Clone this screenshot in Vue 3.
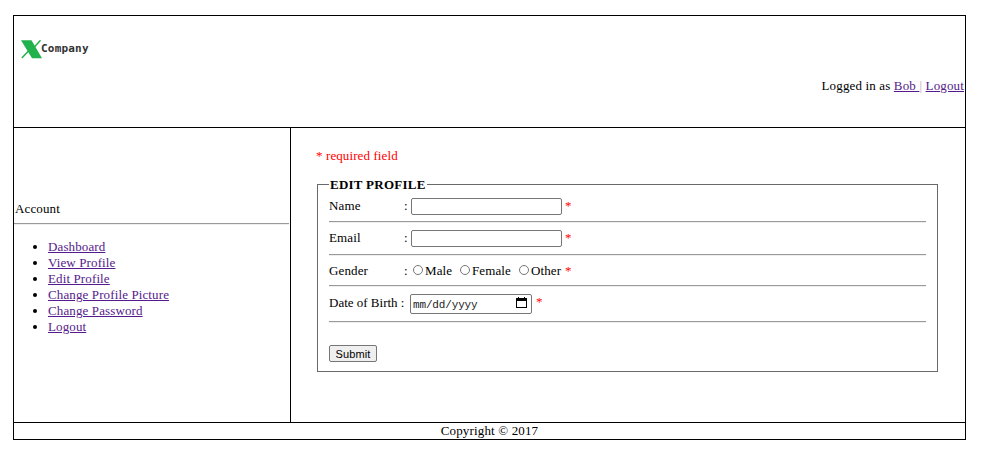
<script setup>
const links = ['Dashboard', 'View Profile', 'Edit Profile', 'Change Profile Picture', 'Change Password', 'Logout']
const genders = ['Male', 'Female', 'Other']
</script>

<template>
  <div class="page">
    <header class="header">
      <div class="logo">
        <svg width="22" height="19" viewBox="0 0 22 19">
          <path d="M0 .2h10.5L21 18.2H11z" fill="#22b14c" />
          <path d="M19.5 .3L13 7.5M7.5 11L.8 18" stroke="#22b14c" stroke-width="1.5" fill="none" />
        </svg>
        <span class="brand">Company</span>
      </div>
      <div class="session">Logged in as <a href="#">Bob&nbsp;</a><span class="bar">|</span> <a href="#">Logout</a></div>
    </header>
    <div class="body">
      <nav class="side">
        <div class="account">Account</div>
        <hr class="rule" />
        <ul>
          <li v-for="l in links" :key="l"><a href="#">{{ l }}</a></li>
        </ul>
      </nav>
      <main class="main">
        <p class="required">* required field</p>
        <fieldset>
          <legend>EDIT PROFILE</legend>
          <div class="row name"><label>Name</label><span class="colon">:</span><input class="text" type="text" /><span class="star">*</span></div>
          <hr class="rule" />
          <div class="row email"><label>Email</label><span class="colon">:</span><input class="text" type="text" /><span class="star">*</span></div>
          <hr class="rule" />
          <div class="row gender">
            <label>Gender</label><span class="colon">:</span>
            <span v-for="g in genders" :key="g" :class="['option', g.toLowerCase()]"><input type="radio" name="gender" />{{ g }}</span>
            <span class="star">*</span>
          </div>
          <hr class="rule" />
          <div class="row birth">
            <label class="dob">Date of Birth :</label>
            <span class="date">
              <input type="text" placeholder="mm/dd/yyyy" />
              <svg width="11" height="12" viewBox="0 0 11 12">
                <path d="M2 0h1v1h5V0h1v1h2v10H0V1h2zM1 4v6h9V4z" fill="#000" fill-rule="evenodd" />
              </svg>
            </span>
            <span class="star">*</span>
          </div>
          <hr class="rule" />
          <button type="button">Submit</button>
        </fieldset>
      </main>
    </div>
    <footer>Copyright © 2017</footer>
  </div>
</template>

<style>
body { margin: 0; background: #fff; }
</style>

<style scoped>
* { box-sizing: border-box; }
.page {
  width: 953px; height: 425px; margin: 15px 0 0 13px;
  border: 1px solid #000; display: grid; grid-template-rows: 112px 295px 16px;
  font: 13px/16px "Liberation Serif", "Times New Roman", serif; color: #000;
  letter-spacing: .12px;
}
a { color: #551a8b; text-decoration: underline; }
.header { border-bottom: 1px solid #000; padding: 24px 1px 0 7px; }
.logo { display: flex; height: 19px; }
.logo svg { flex: none; }
.brand { font: bold 11px/17px "DejaVu Sans Mono", monospace; color: #333; margin-left: -2px; letter-spacing: .2px; }
.session { text-align: right; margin-top: 19px; letter-spacing: .15px; }
.bar { color: #c8a0b8; }
.body { display: grid; grid-template-columns: 277px 1fr; border-bottom: 1px solid #000; }
.side { border-right: 1px solid #000; padding: 73px 1px 0 0; }
.account { padding-left: 1px; height: 22px; }
.rule { margin: 0; border: 0; height: 2px; border-top: 1px solid #9a9a9a; border-bottom: 1px solid #eee; }
ul { margin: 14px 0 0; padding: 0 0 0 34px; }
.main { padding: 20px 27px 0 26px; }
.required { margin: 0; height: 29px; color: #f00; margin-left: -1px; letter-spacing: .1px; }
fieldset { margin: 0; height: 195px; min-width: 0; padding: 0 11px; border: 1px solid #696969; }
legend { font-weight: bold; padding: 0 1px; height: 15px; margin-bottom: 1px; letter-spacing: .25px; }
.row { display: flex; }
.row label { width: 75px; white-space: nowrap; }
.row .dob { width: 81px; padding-top: 1px; letter-spacing: 0; }
.colon { width: 7px; }
.name { height: 28px; padding-top: 5px; }
.email { height: 31px; padding-top: 7px; }
.gender { height: 29px; padding-top: 7px; }
.birth { height: 34px; padding-top: 7px; }
.star { color: #f00; margin-left: 3px; }
.text { width: 151px; height: 17px; border: 1px solid #767676; border-radius: 2px; padding: 0 2px; margin: 0; background: #fff; }
.option { display: flex; width: 47px; }
.female { width: 59px; }
.other { width: 46px; }
input[type="radio"] { appearance: none; width: 10px; height: 10px; border: 1px solid #767676; border-radius: 50%; margin: 2px 2px 0 2px; flex: none; background: #fff; }
.date { display: flex; width: 122px; height: 20px; border: 1px solid #767676; border-radius: 2px; padding: 2px 4px 0 2px; }
.date input { width: 103px; height: 15px; border: 0; padding: 0; margin: 1px 0 0; outline: 0; font: 11px/15px "Liberation Mono", monospace; letter-spacing: -.15px; }
.date input::placeholder { color: #222; opacity: 1; }
.date svg { flex: none; }
.birth .star { margin-left: 4px; }
button { display: block; margin: 22px 0 0; width: 48px; height: 17px; padding: 1px 0 0; border: 1px solid #767676; border-radius: 2px; background: #efefef; color: #000; font: 11px/15px "Liberation Sans", Arial, sans-serif; letter-spacing: .1px; }
.gender .star { margin-left: 2px; }
footer { text-align: center; line-height: 16px; letter-spacing: .15px; }
</style>
